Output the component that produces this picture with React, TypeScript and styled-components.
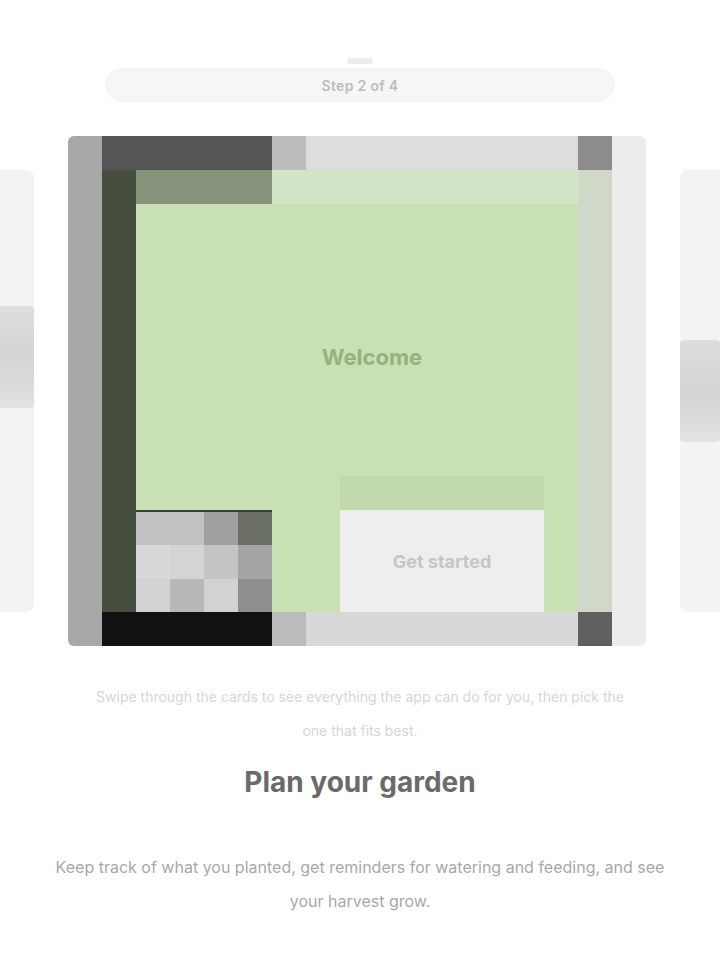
import styled, { createGlobalStyle } from 'styled-components'

const Global = createGlobalStyle`
  html, body { margin: 0; padding: 0; background: #ffffff; }
  body { font-family: Inter, "Noto Sans", sans-serif; }
  * { box-sizing: border-box; }
`

const Page = styled.div`
  width: 720px;
  height: 960px;
  overflow: hidden;
  display: flex;
  flex-direction: column;
  align-items: center;
  padding-top: 34px;
`

const Handle = styled.div`
  width: 34px;
  height: 34px;
  display: flex;
  align-items: center;
  justify-content: center;
  &::after {
    content: '';
    width: 26px;
    height: 6px;
    border-radius: 3px;
    background: #ececec;
    margin-top: 20px;
  }
`

const Pill = styled.div`
  width: 510px;
  height: 34px;
  border-radius: 17px;
  background: #f6f6f6;
  display: flex;
  align-items: center;
  justify-content: center;
  color: #bdbdbd;
  font-size: 14px;
  font-weight: 600;
  letter-spacing: 0.3px;
`

const Carousel = styled.div`
  margin-top: 34px;
  width: 720px;
  height: 510px;
  display: flex;
  align-items: center;
  justify-content: center;
  gap: 34px;
  overflow: hidden;
  padding-right: 6px;
`

const SideCard = styled.div<{ $edge: 'start' | 'end'; $shift: number }>`
  flex: 0 0 578px;
  height: 442px;
  border-radius: 8px;
  background: #f3f3f3;
  display: flex;
  justify-content: ${p => (p.$edge === 'end' ? 'flex-end' : 'flex-start')};
  align-items: flex-start;
  padding-top: ${p => p.$shift}px;
`

const SideMark = styled.div`
  width: 40px;
  height: 102px;
  border-radius: 4px;
  background: linear-gradient(#dedede, #d4d4d4 50%, #e2e2e2);
`

const MainCard = styled.div`
  flex: 0 0 578px;
  height: 510px;
  display: flex;
  flex-direction: column;
  background: #a8a8a8;
  padding-left: 34px;
  border-right: 34px solid #ececec;
  border-radius: 6px;
  overflow: hidden;
`

const Strip = styled.div`
  height: 34px;
  display: flex;
`

const Segment = styled.div<{ $w?: number; $c: string }>`
  ${p => (p.$w ? `flex: 0 0 ${p.$w}px;` : 'flex: 1;')}
  background: ${p => p.$c};
`

const Device = styled.div`
  flex: 1;
  display: flex;
  border-left: 34px solid #454d3c;
  border-right: 34px solid #d0d9c7;
  background: #c8e0b4;
`

const Screen = styled.div`
  flex: 1;
  display: flex;
  flex-direction: column;
`

const ScreenBody = styled.div`
  flex: 1;
  display: flex;
  align-items: center;
  justify-content: center;
  padding-left: 30px;
  color: #93b47c;
  font-size: 22px;
  font-weight: 700;
`

const ScreenBottom = styled.div`
  height: 102px;
  display: flex;
  gap: 68px;
`

const Keys = styled.div`
  flex: 0 0 136px;
  display: grid;
  grid-template-columns: repeat(4, 1fr);
  grid-template-rows: repeat(3, 1fr);
  background: #d4d4d4;
  border-top: 2px solid #3d3d3d;
`

const Key = styled.div<{ $c: string }>`
  background: ${p => p.$c};
`

const Action = styled.div`
  flex: 0 0 204px;
  background: #eeeeee;
  box-shadow: 0 -34px 0 #c0d8ac;
  display: flex;
  align-items: center;
  justify-content: center;
  color: #c6c6c6;
  font-size: 18px;
  font-weight: 700;
`

const Caption = styled.p`
  margin: 34px 0 0;
  width: 540px;
  text-align: center;
  color: #d6d6d6;
  font-size: 14px;
  line-height: 34px;
`

const Title = styled.h1`
  margin: 0;
  line-height: 68px;
  font-size: 28px;
  font-weight: 700;
  color: #6a6a6a;
`

const Description = styled.p`
  margin: 34px 0 0;
  width: 620px;
  text-align: center;
  color: #a8a8a8;
  font-size: 16px;
  line-height: 34px;
`

const keyColors = [
  '#c2c2c2', '#c2c2c2', '#a0a0a0', '#6c6f66',
  '#d8d8d8', '#d4d4d4', '#c4c4c4', '#a4a4a4',
  '#d2d2d2', '#b8b8b8', '#d2d2d2', '#8e8e8e',
]

export default function App() {
  return (
    <>
      <Global />
      <Page>
        <Handle />
        <Pill>Step 2 of 4</Pill>
        <Carousel>
          <SideCard $edge="end" $shift={136}>
            <SideMark />
          </SideCard>
          <MainCard>
            <Strip>
              <Segment $w={170} $c="#555555" />
              <Segment $w={34} $c="#bcbcbc" />
              <Segment $c="#dddddd" />
              <Segment $w={34} $c="#8c8c8c" />
            </Strip>
            <Device>
              <Screen>
                <Strip>
                  <Segment $w={136} $c="#85937a" />
                  <Segment $c="#d3e5c6" />
                </Strip>
                <ScreenBody>Welcome</ScreenBody>
                <ScreenBottom>
                  <Keys>
                    {keyColors.map((c, i) => (
                      <Key key={i} $c={c} />
                    ))}
                  </Keys>
                  <Action>Get started</Action>
                </ScreenBottom>
              </Screen>
            </Device>
            <Strip>
              <Segment $w={170} $c="#111111" />
              <Segment $w={34} $c="#bbbbbb" />
              <Segment $c="#d8d8d8" />
              <Segment $w={34} $c="#606060" />
            </Strip>
          </MainCard>
          <SideCard $edge="start" $shift={170}>
            <SideMark />
          </SideCard>
        </Carousel>
        <Caption>
          Swipe through the cards to see everything the app can do for you, then
          pick the one that fits best.
        </Caption>
        <Title>Plan your garden</Title>
        <Description>
          Keep track of what you planted, get reminders for watering and feeding, and
          see your harvest grow.
        </Description>
      </Page>
    </>
  )
}
